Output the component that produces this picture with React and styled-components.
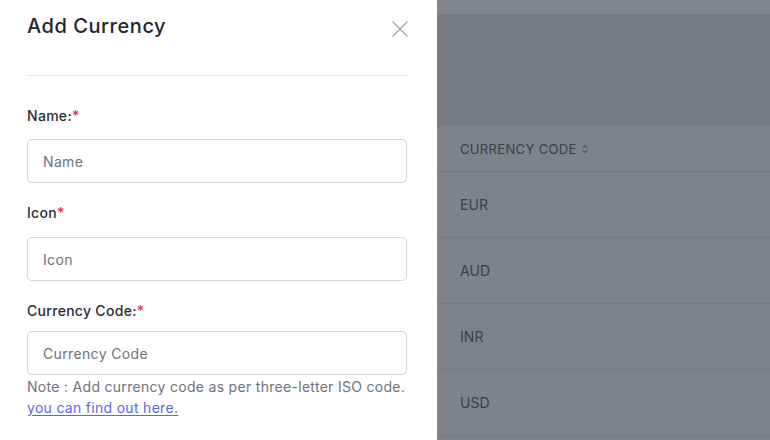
import React from 'react';
import styled, { createGlobalStyle } from 'styled-components';

const GlobalStyle = createGlobalStyle`
    html, body {
        margin: 0;
        padding: 0;
        background: #ffffff;
    }

    body {
        font-family: "Inter", "Noto Sans", "Liberation Sans", sans-serif;
        -webkit-font-smoothing: antialiased;
        letter-spacing: 0.3px;
    }
`;

const Page = styled.div`
    display: flex;
    width: 770px;
    height: 440px;
    overflow: hidden;
`;

const Drawer = styled.aside`
    width: 437px;
    flex-shrink: 0;
    background: #ffffff;
    padding: 0 30px 0 27px;
    box-sizing: border-box;
    display: flex;
    flex-direction: column;
`;

const DrawerHeader = styled.div`
    display: flex;
    justify-content: space-between;
    align-items: flex-start;
    height: 76px;
    box-sizing: border-box;
    padding-top: 12px;
    border-bottom: 1px solid #e7e8eb;

    h2 {
        margin: 0;
        font-size: 20px;
        line-height: 28px;
        font-weight: 500;
        color: #22252b;
        letter-spacing: 0.55px;
    }
`;

const CloseButton = styled.button`
    border: none;
    background: none;
    padding: 0;
    margin: 9px -1px 0 0;
    width: 16px;
    height: 16px;
    cursor: pointer;
    display: flex;

    svg {
        width: 16px;
        height: 16px;
    }
`;

const Form = styled.form`
    display: flex;
    flex-direction: column;
    padding-top: 30px;
`;

const Field = styled.div`
    display: flex;
    flex-direction: column;
    margin-top: ${props => props.first ? '0' : '20px'};
`;

const Label = styled.label`
    font-size: 14px;
    line-height: 20px;
    font-weight: 500;
    color: #2a2d33;
    margin-bottom: ${props => props.gap || 13}px;

    span {
        color: #f0274b;
    }
`;

const Input = styled.input`
    height: 44px;
    box-sizing: border-box;
    border: 1px solid #d3d5da;
    border-radius: 5px;
    padding: 0 15px;
    font-family: inherit;
    font-size: 14px;
    letter-spacing: 0.35px;
    color: #111827;
    outline: none;

    &::placeholder {
        color: #6d727c;
    }
`;

const Note = styled.p`
    margin: 1px 0 0;
    font-size: 14px;
    line-height: 21px;
    color: #6d727c;

    a {
        color: #5b63f5;
        text-decoration: underline;
        text-underline-offset: 2px;
    }
`;

const Backdrop = styled.div`
    flex: 1;
    display: flex;
    flex-direction: column;
    background: #7f828a;
`;

const TopStrip = styled.div`
    height: 14px;
    background: #82858c;
`;

const HeaderArea = styled.div`
    height: 113px;
    background: #787b83;
`;

const Table = styled.div`
    display: flex;
    flex-direction: column;
`;

const HeadCell = styled.div`
    height: 44px;
    display: flex;
    align-items: center;
    padding-left: 23px;
    font-size: 13px;
    color: #3b3e47;
    letter-spacing: 0.35px;
    border-bottom: 1px solid #73767e;

    svg {
        margin-left: 4px;
        width: 8px;
        height: 10px;
    }
`;

const Row = styled.div`
    height: 66px;
    box-sizing: border-box;
    display: flex;
    align-items: center;
    padding-left: 23px;
    font-size: 14px;
    letter-spacing: 0.1px;
    color: #3b3e47;
    border-bottom: 1px solid #75787f;
`;

const fields = [
    { label: 'Name:', placeholder: 'Name', gap: 13 },
    { label: 'Icon', placeholder: 'Icon', gap: 14 },
    { label: 'Currency Code:', placeholder: 'Currency Code', gap: 10 },
];

const codes = ['EUR', 'AUD', 'INR', 'USD'];

const App = () => {
    return (
        <Page>
            <GlobalStyle />
            <Drawer>
                <DrawerHeader>
                    <h2>Add Currency</h2>
                    <CloseButton aria-label="Close">
                        <svg viewBox="0 0 16 16" fill="none" stroke="#a3a7ae" strokeWidth="1.4" strokeLinecap="round">
                            <path d="M1 1L15 15M15 1L1 15" />
                        </svg>
                    </CloseButton>
                </DrawerHeader>
                <Form onSubmit={(e) => e.preventDefault()}>
                    {fields.map((f, i) => (
                        <Field key={f.placeholder} first={i === 0}>
                            <Label gap={f.gap}>{f.label}<span>*</span></Label>
                            <Input type="text" placeholder={f.placeholder} />
                        </Field>
                    ))}
                    <Note>
                        Note : Add currency code as per three-letter ISO code.<br />
                        <a href="#">you can find out here.</a>
                    </Note>
                </Form>
            </Drawer>
            <Backdrop>
                <TopStrip />
                <HeaderArea />
                <Table>
                    <HeadCell>
                        CURRENCY CODE
                        <svg viewBox="0 0 8 10" fill="none" stroke="#3b3e47" strokeWidth="1" strokeLinecap="round" strokeLinejoin="round">
                            <path d="M2 3.5L4 1.5L6 3.5M2 6.5L4 8.5L6 6.5" />
                        </svg>
                    </HeadCell>
                    {codes.map(c => <Row key={c}>{c}</Row>)}
                </Table>
            </Backdrop>
        </Page>
    );
};

export default App;
